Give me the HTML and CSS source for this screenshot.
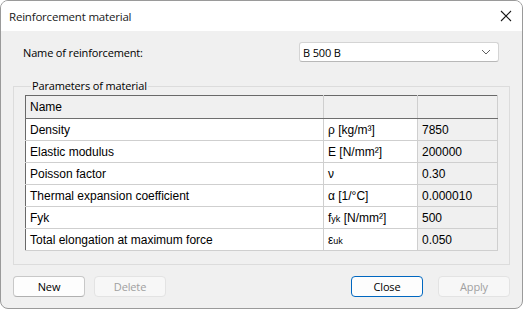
FILE: index.html
```html
<!DOCTYPE html>
<html lang="en">
<head>
  <meta charset="UTF-8" />
  <title>Reinforcement material</title>
  <link rel="stylesheet" href="styles.css">
</head>
<body>

  <div class="janela">
    <div class="titulo">
      <span>Reinforcement material</span>
      <svg class="fechar" width="12" height="12" viewBox="0 0 12 12">
        <path d="M1 1 L11 11 M11 1 L1 11" stroke="#1a1a1a" stroke-width="1.1" fill="none"/>
      </svg>
    </div>

    <div class="conteudo">
      <div class="linha-nome">
        <span>Name of reinforcement:</span>
        <div class="combo">
          <span>B 500 B</span>
          <svg width="10" height="6" viewBox="0 0 10 6">
            <path d="M1 1 L5 5 L9 1" stroke="#606060" stroke-width="1" fill="none"/>
          </svg>
        </div>
      </div>

      <fieldset class="grupo">
        <legend>Parameters of material</legend>
        <table class="grade">
          <tr class="cabecalho">
            <td>Name</td>
            <td></td>
            <td></td>
          </tr>
          <tr>
            <td>Density</td>
            <td>ρ [kg/m³]</td>
            <td class="valor">7850</td>
          </tr>
          <tr>
            <td>Elastic modulus</td>
            <td>E [N/mm²]</td>
            <td class="valor">200000</td>
          </tr>
          <tr>
            <td>Poisson factor</td>
            <td>ν</td>
            <td class="valor">0.30</td>
          </tr>
          <tr>
            <td>Thermal expansion coefficient</td>
            <td>α [1/°C]</td>
            <td class="valor">0.000010</td>
          </tr>
          <tr>
            <td>Fyk</td>
            <td>f<sub>yk</sub> [N/mm²]</td>
            <td class="valor">500</td>
          </tr>
          <tr>
            <td>Total elongation at maximum force</td>
            <td>ε<sub>uk</sub></td>
            <td class="valor">0.050</td>
          </tr>
        </table>
      </fieldset>

      <div class="botoes">
        <div class="esquerda">
          <button>New</button>
          <button disabled>Delete</button>
        </div>
        <div class="direita">
          <button class="padrao">Close</button>
          <button disabled>Apply</button>
        </div>
      </div>
    </div>
  </div>

</body>
</html>
```

FILE: styles.css
```css
* {
  box-sizing: border-box;
}

html, body {
  margin: 0;
  padding: 0;
  background: #ffffff;
}

body {
  font-family: 'Liberation Sans', Arial, sans-serif;
  font-size: 12px;
  color: #000;
}

.janela {
  width: 523px;
  height: 309px;
  border: 1px solid #9a9a9a;
  border-radius: 8px;
  overflow: hidden;
  display: flex;
  flex-direction: column;
  background: #f0f0f0;
}

.titulo {
  height: 30px;
  background: #fff;
  display: flex;
  justify-content: space-between;
  align-items: center;
  padding: 0 9px 0 8px;
  font-family: 'Open Sans', sans-serif;
  font-size: 11.5px;
  letter-spacing: -0.2px;
  color: #1a1a1a;
}

.fechar {
  margin-right: 1px;
}

.conteudo {
  flex: 1;
  padding: 11px 12px 0 12px;
  font-family: 'Open Sans', sans-serif;
  font-size: 11px;
  letter-spacing: -0.15px;
}

.linha-nome {
  display: flex;
  justify-content: space-between;
  align-items: center;
  padding-left: 10px;
  padding-right: 11px;
  height: 20px;
}

.combo {
  width: 200px;
  height: 20px;
  background: #fff;
  border: 1px solid #d4d4d4;
  border-bottom-color: #b8b8b8;
  border-radius: 3px;
  display: flex;
  justify-content: space-between;
  align-items: center;
  padding: 0 7px 0 3px;
}

.grupo {
  margin: 16px 0 0 0;
  padding: 0 11px 13px 11px;
  border: 1px solid #dcdcdc;
  height: 187px;
}

.grupo legend {
  padding: 0 1px;
  margin-left: 6px;
  line-height: 16px;
}

.grade {
  width: 473px;
  border-collapse: collapse;
  margin-top: 1px;
  border-top: 1px solid #a0a0a0;
  border-left: 1px solid #a0a0a0;
  border-right: 1px solid #e3e3e3;
  border-bottom: 1px solid #e3e3e3;
  background: #fff;
  font-family: 'Liberation Sans', Arial, sans-serif;
  font-size: 12px;
  letter-spacing: 0;
}

.grade td {
  height: 22px;
  padding: 0 4px;
  border: 1px solid #cfcfcf;
  white-space: nowrap;
}

.grade td:first-child {
  width: 298px;
  border-left: 1px solid #696969;
}

.grade td:nth-child(2) {
  width: 94px;
}

.grade tr:first-child td {
  border-top: 1px solid #696969;
}

.grade .cabecalho td {
  background: #f0f0f0;
  border-bottom: 1px solid #6e6e6e;
  height: 23px;
}

.grade .valor {
  background: #f0f0f0;
}

.grade sub {
  font-size: 9px;
  vertical-align: baseline;
}

.botoes {
  display: flex;
  justify-content: space-between;
  margin-top: 11px;
}

.esquerda, .direita {
  display: flex;
  gap: 9px;
}

.direita {
  gap: 15px;
}

button {
  width: 72px;
  height: 21px;
  background: #fdfdfd;
  border: 1px solid #c8c8c8;
  border-bottom-color: #b0b0b0;
  border-radius: 4px;
  font-family: 'Open Sans', sans-serif;
  font-size: 11px;
  letter-spacing: -0.15px;
  color: #000;
  padding: 0;
}

button:disabled {
  background: #f7f7f7;
  border-color: #e3e3e3;
  color: #a0a0a0;
}

button.padrao {
  border: 1px solid #0067c0;
}
```
